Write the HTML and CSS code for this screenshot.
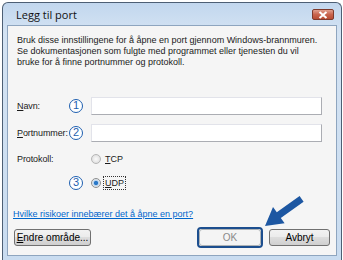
FILE: index.html
```html
<!DOCTYPE html>
<html lang="no">
<head>
    <meta charset="UTF-8">
    <title>Legg til port</title>
    <link rel="stylesheet" href="styles.css">
</head>
<body>
    <div class="window">
        <div class="titlebar">
            <span class="title">Legg til port</span>
            <span class="close">
                <svg width="10" height="8" viewBox="0 0 10 8">
                    <path d="M1.5 1 L8.5 7 M8.5 1 L1.5 7" stroke="#fff" stroke-width="2" />
                </svg>
            </span>
        </div>

        <div class="client">
            <p class="intro">
                Bruk disse innstillingene for å åpne en port gjennom Windows-brannmuren.<br>
                Se dokumentasjonen som fulgte med programmet eller tjenesten du vil<br>
                bruke for å finne portnummer og protokoll.
            </p>

            <div class="form">
                <label class="lbl"><u>N</u>avn:</label>
                <span class="num">1</span>
                <input class="field" type="text">

                <label class="lbl"><u>P</u>ortnummer:</label>
                <span class="num">2</span>
                <input class="field" type="text">

                <span class="lbl">Protokoll:</span>
                <span></span>
                <div class="radio-row">
                    <span class="radio"></span>
                    <span class="opt"><u>T</u>CP</span>
                </div>

                <span></span>
                <span class="num">3</span>
                <div class="radio-row">
                    <span class="radio on"></span>
                    <span class="opt focus"><u>U</u>DP</span>
                </div>
            </div>

            <a class="link" href="#">Hvilke risikoer innebærer det å åpne en port?</a>

            <div class="buttons">
                <button class="btn wide"><u>E</u>ndre område...</button>
                <span class="spacer"></span>
                <span class="ring"><button class="btn ok" disabled>OK</button></span>
                <button class="btn">Avbryt</button>
            </div>
        </div>
    </div>

    <svg class="arrow" width="343" height="260" viewBox="0 0 343 260">
        <polygon points="265,226 273,207 276.8,212.3 299.6,196.1 303.6,201.7 280.8,217.9 284.6,223.2" fill="#1d57a2" />
    </svg>
</body>
</html>
```

FILE: styles.css
```css
* {
    box-sizing: border-box;
}

body {
    margin: 0;
    width: 343px;
    height: 260px;
    background-color: #ffffff;
    font-family: "Liberation Sans", Arial, sans-serif;
    font-size: 9px;
    color: #1a1a1a;
    overflow: hidden;
}

.window {
    margin: 2px 1px 0 2px;
    height: 258px;
    border: 1px solid #4d5f74;
    border-bottom: none;
    border-radius: 6px 6px 0 0;
    background: linear-gradient(#c2d7ee, #d4e3f3 30px, #c9dcf0);
    padding: 0 4px 4px 4px;
    display: flex;
    flex-direction: column;
}

.titlebar {
    height: 22px;
    display: flex;
    align-items: center;
    justify-content: space-between;
    padding: 0 3px 0 9px;
}

.title {
    font-family: "Open Sans", sans-serif;
    font-size: 11px;
    color: #111;
}

.close {
    width: 22px;
    height: 11px;
    margin-top: 1px;
    border: 1px solid #7e3a2c;
    border-radius: 2px;
    background: linear-gradient(#e1a08f, #c8644d 50%, #b84c34);
    display: flex;
    align-items: center;
    justify-content: center;
}

.client {
    flex-grow: 1;
    border: 1px solid #8ea5bf;
    background-color: #f5f5f5;
    padding-top: 9px;
}

.intro {
    margin: 0;
    padding-left: 9px;
    line-height: 11px;
    white-space: nowrap;
}

.form {
    margin-top: 29px;
    padding-left: 9px;
    display: grid;
    grid-template-columns: 53px 21px 231px;
    grid-template-rows: 18px 18px 15px 15px;
    row-gap: 9px;
    align-items: center;
}

.lbl {
    white-space: nowrap;
    letter-spacing: -0.1px;
}

.num {
    width: 14px;
    height: 14px;
    margin-left: -1px;
    border: 1.5px solid #1e5fb0;
    border-radius: 50%;
    color: #1e5fb0;
    font-size: 11px;
    line-height: 11px;
    text-align: center;
    background: #fff;
}

.field {
    height: 18px;
    margin: 0;
    border: 1px solid #abadb3;
    border-top-color: #e2e3ea;
    border-left-color: #e2e3ea;
    background: #fff;
}

.radio-row {
    display: flex;
    align-items: center;
    gap: 3px;
}

.radio {
    width: 10px;
    height: 10px;
    border: 1px solid #b5b5b5;
    border-radius: 50%;
    background: radial-gradient(#fafafa, #d8d8d8);
}

.radio.on {
    border-color: #8e8f8f;
    background: radial-gradient(#2a78c8 30%, #b9d4ee 45%, #eaeaea 70%);
}

.opt {
    padding: 1px 1px;
}

.focus {
    outline: 1px dotted #333;
}

.link {
    display: block;
    margin: 18px 0 0 5px;
    color: #0066cc;
    line-height: 13px;
}

.buttons {
    margin-top: 6px;
    height: 21px;
    display: flex;
    align-items: center;
    padding: 0 6px;
    gap: 6px;
}

.spacer {
    flex-grow: 1;
}

.btn {
    height: 17px;
    width: 61px;
    padding: 0;
    font-family: "Liberation Sans", Arial, sans-serif;
    font-size: 10px;
    white-space: nowrap;
    color: #000;
    border: 1px solid #707070;
    border-radius: 3px;
    background: linear-gradient(#f2f2f2, #ebebeb 50%, #dddddd 50%, #cfcfcf);
}

.btn.wide {
    width: 77px;
}

.ring {
    border: 2px solid #1c4e8e;
    border-radius: 4px;
    height: 21px;
}

.btn.ok {
    width: 62px;
    border-color: #adb2b5;
    background: #f4f4f4;
    color: #8a8a8a;
    display: block;
}

.arrow {
    position: absolute;
    top: 0;
    left: 0;
    pointer-events: none;
}
```
